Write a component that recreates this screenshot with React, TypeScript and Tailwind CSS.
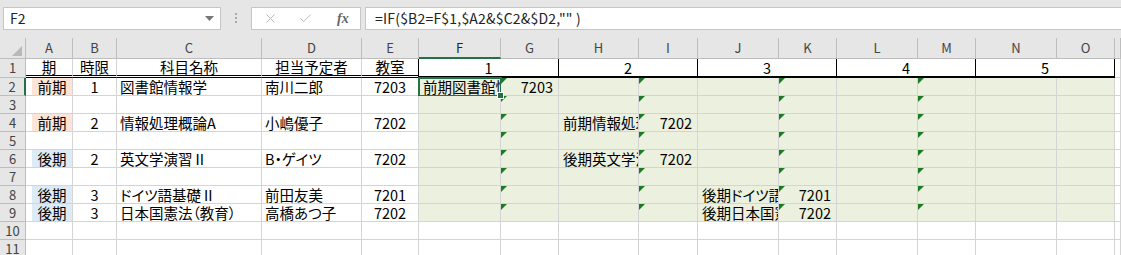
import React from 'react';
import { X, Check } from 'lucide-react';

// 列幅: 行番号, A..O, P(はみ出し)
const gridCols =
  'grid grid-cols-[26px_47px_44px_145px_100px_57px_82px_58px_80px_59px_81px_58px_81px_58px_81px_58px_6px]';
const letters = ['A', 'B', 'C', 'D', 'E', 'F', 'G', 'H', 'I', 'J', 'K', 'L', 'M', 'N', 'O', ''];

type Row = {
  n: number;
  a?: string;
  b?: string;
  c?: string;
  d?: string;
  e?: string;
  x?: Record<string, string>;
};

const rows: Row[] = [
  { n: 2, a: '前期', b: '1', c: '図書館情報学', d: '南川二郎', e: '7203', x: { F: '前期図書館情報学南川二郎', G: '7203' } },
  { n: 3 },
  { n: 4, a: '前期', b: '2', c: '情報処理概論A', d: '小嶋優子', e: '7202', x: { H: '前期情報処理概論A小嶋優子', I: '7202' } },
  { n: 5 },
  { n: 6, a: '後期', b: '2', c: '英文学演習Ⅱ', d: 'B・ゲイツ', e: '7202', x: { H: '後期英文学演習ⅡB・ゲイツ', I: '7202' } },
  { n: 7 },
  { n: 8, a: '後期', b: '3', c: 'ドイツ語基礎Ⅱ', d: '前田友美', e: '7201', x: { J: '後期ドイツ語基礎Ⅱ前田友美', K: '7201' } },
  { n: 9, a: '後期', b: '3', c: '日本国憲法（教育）', d: '高橋あつ子', e: '7202', x: { J: '後期日本国憲法（教育）高橋あつ子', K: '7202' } },
  { n: 10 },
  { n: 11 },
];

const font = "font-['Noto_Sans_CJK_JP',sans-serif] [font-feature-settings:'palt']";
const cellBase =
  'relative flex items-center whitespace-nowrap border-r border-b border-[#d4d4d4] text-[14.5px] leading-[16px] text-black';
const hdrBase =
  'flex items-center justify-center border-r border-b border-[#bdbdbd] bg-[#e6e6e6] text-[13px] leading-[16px] text-[#444]';

const ErrorMark = () => (
  <svg className="absolute left-0 top-0" width="6" height="6" viewBox="0 0 6 6">
    <polygon points="0,0 6,0 0,6" fill="#1d7a24" />
  </svg>
);

const Toolbar = () => (
  <div className={`flex h-[38px] items-start bg-[#e6e6e6] pt-[7px] ${font}`}>
    <div className="ml-[3px] flex h-[23px] w-[218px] items-center justify-between border border-[#c6c6c6] bg-white pl-[6px] pr-[6px]">
      <span className="text-[14px] text-[#222]">F2</span>
      <svg width="9" height="5" viewBox="0 0 9 5">
        <polygon points="0,0 9,0 4.5,5" fill="#777" />
      </svg>
    </div>
    <div className="ml-[14px] mr-[14px] flex flex-col gap-[2px] pt-[6px]">
      <span className="h-[2px] w-[2px] bg-[#a8a8a8]" />
      <span className="h-[2px] w-[2px] bg-[#a8a8a8]" />
      <span className="h-[2px] w-[2px] bg-[#a8a8a8]" />
    </div>
    <div className="flex h-[23px] w-[110px] items-center border border-[#c6c6c6] bg-white">
      <X className="ml-[11px] h-[15px] w-[15px] text-[#b9b9b9]" strokeWidth={1.6} />
      <Check className="ml-[20px] h-[15px] w-[15px] text-[#b9b9b9]" strokeWidth={1.6} />
      <span className="ml-[24px] font-['Liberation_Serif',serif] text-[14px] font-bold italic text-[#666]">fx</span>
    </div>
    <div className="ml-[4px] flex h-[23px] flex-1 items-center border border-r-0 border-[#c6c6c6] bg-white pl-[9px]">
      <span className="text-[14px] tracking-[0.2px] text-[#222]">=IF($B2=F$1,$A2&amp;$C2&amp;$D2,"" )</span>
    </div>
  </div>
);

const HeaderRow = () => (
  <div className={`${gridCols} h-[21px]`}>
    <div className="relative border-r border-b border-[#bdbdbd] bg-[#e6e6e6]">
      <svg className="absolute left-[12px] top-[8px]" width="10" height="10" viewBox="0 0 10 10">
        <polygon points="10,0 10,10 0,10" fill="#b8b8b8" />
      </svg>
    </div>
    {letters.map((l, i) =>
      l === 'F' ? (
        <div key={i} className={`${hdrBase} border-b-2 border-b-[#217346] bg-[#d3d3d3] text-[#262626]`}>
          {l}
        </div>
      ) : (
        <div key={i} className={hdrBase}>
          {l}
        </div>
      )
    )}
  </div>
);

const TitleRow = () => {
  const t = 'border-b-[3px] border-double border-b-black';
  return (
    <div className={`${gridCols} h-[19px]`}>
      <div className={hdrBase}>1</div>
      <div className={`${cellBase} ${t} justify-center text-[#c00000]`}>期</div>
      <div className={`${cellBase} ${t} justify-center`}>時限</div>
      <div className={`${cellBase} ${t} justify-center text-[#c00000]`}>科目名称</div>
      <div className={`${cellBase} ${t} justify-center text-[#c00000]`}>担当予定者</div>
      <div className={`${cellBase} ${t} justify-center border-r-black`}>教室</div>
      {['1', '2', '3', '4', '5'].map((v) => (
        <div
          key={v}
          className="col-span-2 flex items-center justify-center border-r border-b-2 border-black text-[14.5px] leading-[16px] text-black"
        >
          {v}
        </div>
      ))}
      <div className={cellBase} />
    </div>
  );
};

const DataRow = ({ row }: { row: Row }) => {
  const green = row.n >= 2 && row.n <= 9;
  const fill = row.a === '前期' ? 'bg-[#fce4d6]' : row.a === '後期' ? 'bg-[#ddebf7]' : '';
  return (
    <div className={`${gridCols} h-[18px]`}>
      <div
        className={
          row.n === 2
            ? `${hdrBase} border-r-2 border-r-[#217346] bg-[#d3d3d3] text-[#3a3a3a]`
            : hdrBase
        }
      >
        {row.n}
      </div>
      <div className={cellBase}>
        {row.a && (
          <div className={`ml-[6px] flex h-full w-[40px] items-center justify-center ${fill}`}>{row.a}</div>
        )}
      </div>
      <div className={`${cellBase} justify-center`}>{row.b}</div>
      <div className={`${cellBase} pl-[3px]`}>{row.c}</div>
      <div className={`${cellBase} pl-[3px]`}>{row.d}</div>
      <div className={`${cellBase} justify-center`}>{row.e}</div>
      {letters.slice(5, 15).map((l, i) => {
        const text = row.x?.[l];
        const numCol = i % 2 === 1;
        return (
          <div
            key={l}
            className={`${cellBase} ${green ? 'bg-[#ebf1de]' : ''} ${numCol ? 'justify-end pr-[5px]' : 'pl-[4px]'}`}
          >
            {text && (
              <span className={numCol ? 'block' : 'block min-w-0 flex-1 overflow-hidden'}>{text}</span>
            )}
            {green && numCol && l !== 'O' && <ErrorMark />}
            {row.n === 2 && l === 'F' && (
              <>
                <div className="absolute -left-px -top-px h-[20px] w-[84px] border-2 border-[#217346]" />
                <div className="absolute -bottom-[4px] -right-[4px] z-10 h-[7px] w-[7px] border border-white bg-[#217346]" />
              </>
            )}
          </div>
        );
      })}
      <div className={cellBase} />
    </div>
  );
};

export default function App() {
  return (
    <div className={`h-[255px] w-[1121px] overflow-hidden bg-white ${font}`}>
      <Toolbar />
      <HeaderRow />
      <TitleRow />
      {rows.map((r) => (
        <DataRow key={r.n} row={r} />
      ))}
    </div>
  );
}
